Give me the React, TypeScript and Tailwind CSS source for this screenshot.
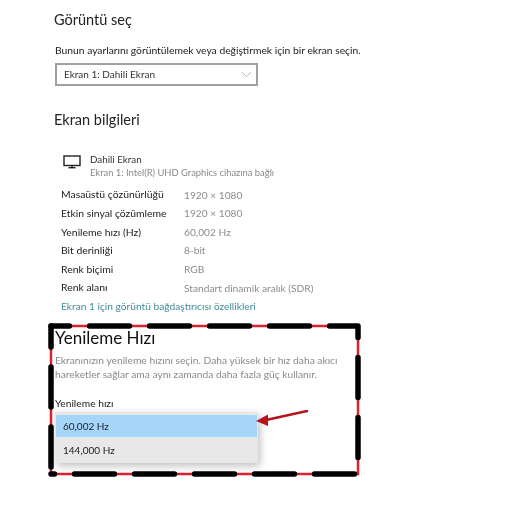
import { ChevronDown } from "lucide-react";

const rows = [
  ["Masaüstü çözünürlüğü", "1920 × 1080"],
  ["Etkin sinyal çözümleme", "1920 × 1080"],
  ["Yenileme hızı (Hz)", "60,002 Hz"],
  ["Bit derinliği", "8-bit"],
  ["Renk biçimi", "RGB"],
  ["Renk alanı", "Standart dinamik aralık (SDR)"],
];

const App = () => {
  return (
    <div className="w-[524px] h-[505px] overflow-hidden bg-white pl-[54px] pt-[10px] text-[#1a1a1a] font-['Lato',sans-serif] blur-[0.4px]">
      <h2 className="text-[14.5px] leading-[20px] text-[#222]">Görüntü seç</h2>
      <p className="mt-[13px] ml-px text-[10.3px] leading-[14px] whitespace-nowrap">
        Bunun ayarlarını görüntülemek veya değiştirmek için bir ekran seçin.
      </p>
      <div className="mt-[6px] ml-px w-[203px] h-[23px] border-2 border-[#a0a0a0] flex items-center justify-between pl-[7px] pr-[1px] text-[10px] text-[#333]">
        <span>Ekran 1: Dahili Ekran</span>
        <ChevronDown className="w-[17px] h-[17px] text-[#999]" strokeWidth={1} />
      </div>

      <h2 className="mt-[24px] text-[14.5px] leading-[20px] text-[#222]">Ekran bilgileri</h2>

      <div className="mt-[23px] ml-[9px] flex items-start gap-[9px]">
        <svg className="mt-[2px]" width="18" height="14" viewBox="0 0 18 14" fill="none" stroke="#222">
          <rect x="1" y="1" width="16" height="9.5" strokeWidth="1.4" />
          <path d="M5.5 12.7h7" strokeWidth="1.4" />
          <path d="M9 10.5v2" strokeWidth="1.4" />
        </svg>
        <div>
          <div className="text-[9.8px] leading-[13px] text-[#333]">Dahili Ekran</div>
          <div className="text-[9.4px] leading-[13px] text-[#8a8a8a]">Ekran 1: Intel(R) UHD Graphics cihazına bağlı</div>
        </div>
      </div>

      <div className="mt-[7px] ml-[7px]">
        {rows.map((row) => (
          <div key={row[0]} className="flex h-[18.6px] items-center text-[10.4px]">
            <span className="w-[123px] text-[#222] whitespace-nowrap">{row[0]}</span>
            <span className="text-[10.2px] text-[#8c8c8c] whitespace-nowrap">{row[1]}</span>
          </div>
        ))}
        <div className="h-[18.6px] flex items-center text-[10.2px] text-[#458d98]">Ekran 1 için görüntü bağdaştırıcısı özellikleri</div>
      </div>

      <div className="relative mt-[7px] -ml-[6px] w-[314px] h-[154px] pl-[7px] pt-[5px]">
        <svg className="absolute left-0 top-0" width="314" height="154" viewBox="0 0 314 154" fill="none">
          <rect x="3" y="3" width="307" height="148" stroke="#d9232e" strokeWidth="2.5" />
          <path d="M3 3H310V151H3" stroke="#000" strokeWidth="5.5" strokeLinecap="round" strokeLinejoin="round" strokeDasharray="40 20" strokeDashoffset="21.5" />
          <path d="M3 151V3" stroke="#000" strokeWidth="5.5" strokeLinecap="round" strokeDasharray="40 20" strokeDashoffset="-7" />
        </svg>
        <h3 className="relative text-[17px] leading-[20px] text-[#111]">Yenileme Hızı</h3>
        <p className="relative mt-[5px] text-[10.25px] leading-[14px] text-[#8a8a8a] w-[300px]">
          Ekranınızın yenileme hızını seçin. Daha yüksek bir hız daha akıcı hareketler sağlar ama aynı zamanda daha fazla güç kullanır.
        </p>
        <div className="relative mt-[15px] text-[10.25px] leading-[14px] text-[#222]">Yenileme hızı</div>
        <div className="relative mt-[2px] w-[203px] bg-[#e8e8e8] pt-[3px] shadow-[2px_3px_8px_rgba(0,0,0,0.25)]">
          <div className="h-[22px] mx-px flex items-center pl-[7px] bg-[#a5d6f9] text-[10px] text-[#223]">60,002 Hz</div>
          <div className="h-[26px] flex items-center pl-[8px] text-[10px] text-[#222]">144,000 Hz</div>
          <svg className="absolute left-[201px] -top-[2px]" width="56" height="22" viewBox="0 0 56 22" fill="none">
            <path d="M51 1 L10 10" stroke="#b5141c" strokeWidth="2.5" strokeLinecap="round" />
            <path d="M0 11 L12 4.5 L12 16 Z" fill="#b5141c" />
          </svg>
        </div>
      </div>
    </div>
  );
};

export default App;
